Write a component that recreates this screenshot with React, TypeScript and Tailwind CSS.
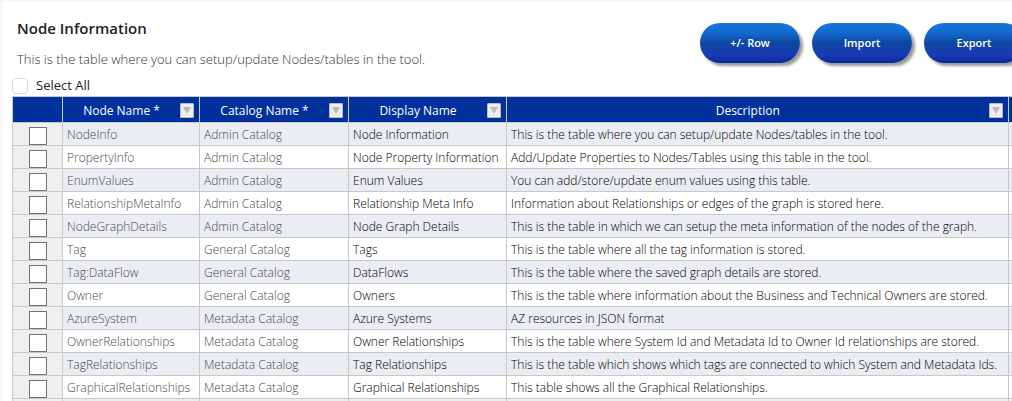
interface NodeRow {
  name: string;
  catalog: string;
  display: string;
  description: string;
}

const ROWS: NodeRow[] = [
  { name: 'NodeInfo', catalog: 'Admin Catalog', display: 'Node Information', description: 'This is the table where you can setup/update Nodes/tables in the tool.' },
  { name: 'PropertyInfo', catalog: 'Admin Catalog', display: 'Node Property Information', description: 'Add/Update Properties to Nodes/Tables using this table in the tool.' },
  { name: 'EnumValues', catalog: 'Admin Catalog', display: 'Enum Values', description: 'You can add/store/update enum values using this table.' },
  { name: 'RelationshipMetaInfo', catalog: 'Admin Catalog', display: 'Relationship Meta Info', description: 'Information about Relationships or edges of the graph is stored here.' },
  { name: 'NodeGraphDetails', catalog: 'Admin Catalog', display: 'Node Graph Details', description: 'This is the table in which we can setup the meta information of the nodes of the graph.' },
  { name: 'Tag', catalog: 'General Catalog', display: 'Tags', description: 'This is the table where all the tag information is stored.' },
  { name: 'Tag:DataFlow', catalog: 'General Catalog', display: 'DataFlows', description: 'This is the table where the saved graph details are stored.' },
  { name: 'Owner', catalog: 'General Catalog', display: 'Owners', description: 'This is the table where information about the Business and Technical Owners are stored.' },
  { name: 'AzureSystem', catalog: 'Metadata Catalog', display: 'Azure Systems', description: 'AZ resources in JSON format' },
  { name: 'OwnerRelationships', catalog: 'Metadata Catalog', display: 'Owner Relationships', description: 'This is the table where System Id and Metadata Id to Owner Id relationships are stored.' },
  { name: 'TagRelationships', catalog: 'Metadata Catalog', display: 'Tag Relationships', description: 'This is the table which shows which tags are connected to which System and Metadata Ids.' },
  { name: 'GraphicalRelationships', catalog: 'Metadata Catalog', display: 'Graphical Relationships', description: 'This table shows all the Graphical Relationships.' },
];

export default function App() {
  return (
    <div className="h-screen overflow-hidden border-l-2 border-t border-[#f5f5fb] bg-white font-['Open_Sans',sans-serif] text-[#222]">
      <PageHeader />
      <label className="ml-2.5 flex w-fit items-center gap-2 text-[13px] leading-[21px]">
        <input type="checkbox" className="size-4 appearance-none rounded border border-[#d9d9d9] bg-white" />
        Select All
      </label>
      <NodeTable />
    </div>
  );
}

function PageHeader() {
  return (
    <header className="flex h-[74px] justify-between pl-[15px]">
      <div className="pt-4">
        <h1 className="text-[15px] leading-[22px] font-semibold">Node Information</h1>
        <p className="mt-2.5 text-[13px] leading-5 font-light text-[#333]">
          This is the table where you can setup/update Nodes/tables in the tool.
        </p>
      </div>
      <div className="-mr-3 flex shrink-0 gap-3 pt-[22px]">
        <ActionButton label="+/- Row" />
        <ActionButton label="Import" />
        <ActionButton label="Export" />
      </div>
    </header>
  );
}

function ActionButton({ label }: { label: string }) {
  return (
    <button
      type="button"
      className="h-10 w-[100px] rounded-full bg-[linear-gradient(#1976d9_0%,#1468cc_25%,#0d47a1_50%,#1c39b4_80%,#002c98_100%)] text-[11px] font-semibold text-white shadow-[3px_3px_3px_#999]"
    >
      {label}
    </button>
  );
}

// ── Table ───────────────────────────────────────────────────────────────────

function NodeTable() {
  return (
    <div className="ml-2.5">
      <table className="w-full table-fixed border-collapse text-[12px] leading-5">
        <colgroup>
          <col className="w-[50px]" />
          <col className="w-[137px]" />
          <col className="w-[149px]" />
          <col className="w-[158px]" />
          <col />
          <col className="w-1" />
        </colgroup>
        <thead>
          <tr className="h-[26px] bg-[#00309c] text-white">
            <th className="border border-[#c8c8c8] p-0" />
            <HeaderCell label="Node Name *" />
            <HeaderCell label="Catalog Name *" />
            <HeaderCell label="Display Name" />
            <HeaderCell label="Description" />
            <th className="border-y border-[#c8c8c8] p-0" />
          </tr>
        </thead>
        <tbody>
          {ROWS.map((row) => (
            <tr key={row.name} className="h-[23px] odd:bg-[#eaedf2]">
              <SelectCell label={`Select ${row.name}`} />
              <TextCell text={row.name} muted />
              <TextCell text={row.catalog} muted />
              <TextCell text={row.display} />
              <TextCell text={row.description} />
              <td className="border-y border-[#c8c8c8] p-0" />
            </tr>
          ))}
          {/* blank row for new entries */}
          <tr className="h-[23px] bg-[#eaedf2]">
            <td className="border border-[#c8c8c8] bg-[#efefef] p-0" />
            <TextCell text="" />
            <TextCell text="" />
            <TextCell text="" />
            <TextCell text="" />
            <td className="border-y border-[#c8c8c8] p-0" />
          </tr>
        </tbody>
      </table>
    </div>
  );
}

function HeaderCell({ label }: { label: string }) {
  return (
    <th className="border border-[#c8c8c8] px-0 pt-0.5 pb-0 font-normal">
      <div className="flex items-center pr-[5px]">
        <span className="flex-1 text-center">{label}</span>
        <button
          type="button"
          aria-label={`Filter ${label}`}
          className="flex h-[15px] w-3.5 items-center justify-center rounded-[1px] border border-[#bbb] bg-[#eee]"
        >
          <svg viewBox="0 0 8 7" className="h-[7px] w-2 shrink-0" fill="#bbb">
            <path d="M0 0h8L4 7z" />
          </svg>
        </button>
      </div>
    </th>
  );
}

function SelectCell({ label }: { label: string }) {
  return (
    <td className="border border-[#c8c8c8] bg-[#efefef] p-0 align-bottom">
      <input
        type="checkbox"
        aria-label={label}
        className="mx-auto block size-[18px] appearance-none border border-[#6b7280] bg-white"
      />
    </td>
  );
}

function TextCell({ text, muted = false }: { text: string; muted?: boolean }) {
  return (
    <td className={`overflow-hidden border border-[#c8c8c8] px-1 pt-px pb-0 font-light whitespace-nowrap ${muted ? 'text-[#4a4a4a]' : 'text-black'}`}>
      {text}
    </td>
  );
}
